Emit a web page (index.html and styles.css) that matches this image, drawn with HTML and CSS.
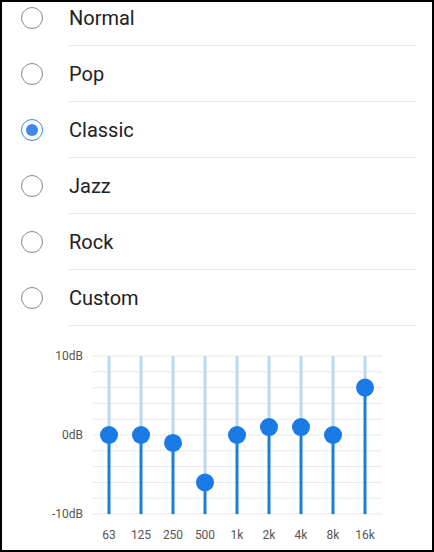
FILE: index.html
```html
<!DOCTYPE html>
<html lang="en">
<head>
    <meta charset="UTF-8">
    <meta name="viewport" content="width=device-width, initial-scale=1.0">
    <title>Equalizer</title>
    <link rel="stylesheet" href="styles.css">
</head>
<body>
    <div class="frame">
        <ul class="presets">
            <li class="preset"><span class="radio"></span><span class="label">Normal</span></li>
            <li class="preset"><span class="radio"></span><span class="label">Pop</span></li>
            <li class="preset"><span class="radio checked"></span><span class="label">Classic</span></li>
            <li class="preset"><span class="radio"></span><span class="label">Jazz</span></li>
            <li class="preset"><span class="radio"></span><span class="label">Rock</span></li>
            <li class="preset"><span class="radio"></span><span class="label">Custom</span></li>
        </ul>
        <svg class="chart" id="chart" width="430" height="224" viewBox="0 0 430 224"></svg>
    </div>
    <script>
        const chart = document.getElementById('chart');
        const ns = 'http://www.w3.org/2000/svg';

        const bands = [
            { label: '63', gain: 0 },
            { label: '125', gain: 0 },
            { label: '250', gain: -1 },
            { label: '500', gain: -6 },
            { label: '1k', gain: 0 },
            { label: '2k', gain: 1 },
            { label: '4k', gain: 1 },
            { label: '8k', gain: 0 },
            { label: '16k', gain: 6 }
        ];

        const gridTop = 30;
        const gridBottom = 188;
        const gridLeft = 91;
        const gridRight = 380;

        const yFor = (db) => gridTop + (10 - db) * (gridBottom - gridTop) / 20;

        const add = (tag, attrs, text) => {
            const el = document.createElementNS(ns, tag);
            for (const key in attrs) el.setAttribute(key, attrs[key]);
            if (text) el.textContent = text;
            chart.appendChild(el);
            return el;
        };

        // grid, one line every 2dB
        for (let db = 10; db >= -10; db -= 2) {
            add('line', { x1: gridLeft, x2: gridRight, y1: yFor(db), y2: yFor(db), class: 'grid' });
        }

        add('text', { x: 81, y: yFor(10) + 4, class: 'axis-y' }, '10dB');
        add('text', { x: 81, y: yFor(0) + 4, class: 'axis-y' }, '0dB');
        add('text', { x: 81, y: yFor(-10) + 4, class: 'axis-y' }, '-10dB');

        bands.forEach((band, i) => {
            const x = 107 + i * 32;
            const y = yFor(band.gain);
            add('line', { x1: x, x2: x, y1: gridTop, y2: y, class: 'track' });
            add('line', { x1: x, x2: x, y1: y, y2: gridBottom, class: 'level' });
            add('circle', { cx: x, cy: y, r: 9, class: 'knob' });
            add('text', { x: x, y: 213, class: 'axis-x' }, band.label);
        });
    </script>
</body>
</html>
```
FILE: styles.css
```css
body {
    margin: 0;
    padding: 0;
    font-family: Roboto, "Liberation Sans", sans-serif;
    background: #fff;
}
.frame {
    width: 434px;
    height: 552px;
    box-sizing: border-box;
    border: 2px solid #000;
    overflow: hidden;
}
.presets {
    list-style: none;
    margin: -12px 0 0;
    padding: 0;
}
.preset {
    display: flex;
    align-items: stretch;
    height: 56px;
}
.radio {
    align-self: center;
    width: 22px;
    height: 22px;
    margin: 0 26px 0 19px;
    border: 1px solid #8a8a8a;
    border-radius: 50%;
    box-sizing: border-box;
    position: relative;
}
.radio.checked {
    border: 1.5px solid #3f86ee;
}
.radio.checked::after {
    content: "";
    position: absolute;
    left: 3.5px;
    top: 3.5px;
    width: 12px;
    height: 12px;
    border-radius: 50%;
    background: #3f86ee;
}
.label {
    flex: 1;
    display: flex;
    align-items: center;
    margin-right: 16px;
    font-size: 20px;
    color: #222;
    border-bottom: 1px solid #e8e8e8;
}
.chart {
    display: block;
}
.grid {
    stroke: #e8e8e8;
    stroke-width: 1;
}
.track {
    stroke: #bcd7f5;
    stroke-width: 3;
}
.level {
    stroke: #1a7be6;
    stroke-width: 3;
}
.knob {
    fill: #1a7be6;
}
.axis-y {
    font-size: 12px;
    fill: #555;
    text-anchor: end;
}
.axis-x {
    font-size: 12px;
    fill: #555;
    text-anchor: middle;
}
```
